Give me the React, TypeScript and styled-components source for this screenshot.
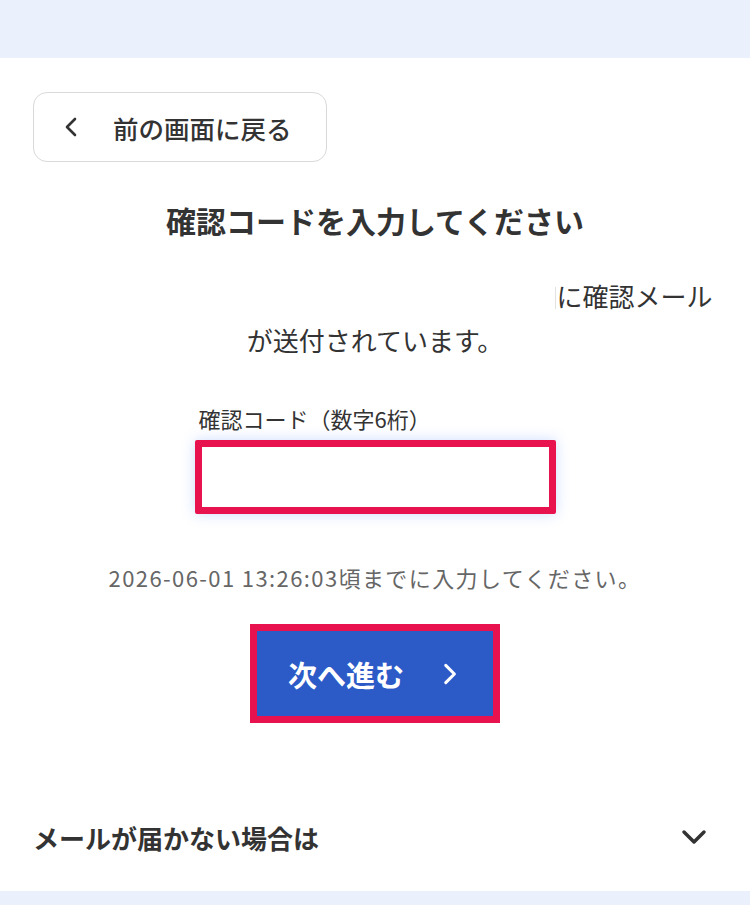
import React, { useState } from 'react';
import styled, { createGlobalStyle } from 'styled-components';

const GlobalStyle = createGlobalStyle`
    body {
        margin: 0;
        background: #ffffff;
        font-family: 'Noto Sans CJK JP', 'Noto Sans', sans-serif;
        color: #333333;
    }
`;

const Band = styled.div<{ height: number }>`
    height: ${({ height }) => height}px;
    background-color: #eaf1fd;
`;

const Card = styled.main`
    display: flex;
    flex-direction: column;
    padding: 34px 33px 36px;
    background-color: #ffffff;
`;

const BackButton = styled.button`
    display: flex;
    align-items: center;
    gap: 29px;
    width: 294px;
    height: 70px;
    padding: 0 0 0 26px;
    box-sizing: border-box;
    background: #ffffff;
    border: 1.5px solid #d9d9d9;
    border-radius: 14px;
    font-family: inherit;
    font-size: 25.5px;
    font-weight: 500;
    color: #333333;
    cursor: pointer;
`;

const Title = styled.h1`
    margin: 38px 0 0;
    font-size: 30px;
    font-weight: 700;
    line-height: 40px;
    text-align: center;
    color: #333333;
`;

const Lead = styled.p`
    margin: 34px 0 0;
    font-size: 26px;
    line-height: 44px;
    text-align: center;
    color: #333333;
`;

const HiddenAddress = styled.span`
    display: inline-block;
    width: 518px;
    height: 22px;
    vertical-align: -2px;
    border-right: 1px solid #e2e2e2;
`;

const Field = styled.div`
    display: flex;
    flex-direction: column;
    align-self: center;
    gap: 7px;
    margin-top: 41px;
`;

const Label = styled.label`
    padding-left: 4px;
    font-size: 22px;
    line-height: 30px;
    color: #333333;
`;

const CodeInput = styled.input`
    width: 361px;
    height: 74px;
    box-sizing: border-box;
    border: 7px solid #e8124f;
    border-radius: 2px;
    outline: none;
    padding: 0 14px;
    font-family: inherit;
    font-size: 26px;
    letter-spacing: 6px;
    color: #333333;
    box-shadow: 0 0 14px rgba(90, 140, 255, 0.3);
`;

const Deadline = styled.p`
    margin: 48px 0 0;
    font-size: 22px;
    line-height: 30px;
    letter-spacing: 1.4px;
    text-align: center;
    color: #666666;
`;

const NextButton = styled.button`
    display: flex;
    align-items: center;
    justify-content: center;
    gap: 32px;
    align-self: center;
    width: 250px;
    height: 99px;
    margin-top: 32px;
    box-sizing: border-box;
    padding: 0;
    background-color: #2c5bc8;
    border: 7px solid #e8124f;
    font-family: inherit;
    font-size: 29px;
    font-weight: 700;
    color: #ffffff;
    cursor: pointer;
`;

const Accordion = styled.button`
    display: flex;
    align-items: center;
    justify-content: space-between;
    margin-top: 96px;
    padding: 0 8px 0 0;
    height: 36px;
    background: transparent;
    border: none;
    font-family: inherit;
    font-size: 26px;
    font-weight: 700;
    color: #333333;
    cursor: pointer;
`;

const Chevron = ({ dir, size, color, width }: { dir: 'left' | 'right' | 'down'; size: number; color: string; width: number }) => {
    const d = dir === 'left' ? 'M15 4 L7 12 L15 20' : dir === 'right' ? 'M9 4 L17 12 L9 20' : 'M4 8 L12 16 L20 8';
    return (
        <svg width={size} height={size} viewBox="0 0 24 24" fill="none">
            <path d={d} stroke={color} strokeWidth={width} strokeLinecap="round" strokeLinejoin="round" />
        </svg>
    );
};

export default function App() {
    const [code, setCode] = useState('');
    const [open, setOpen] = useState(false);

    return (
        <>
            <GlobalStyle />
            <Band height={58} />
            <Card>
                <BackButton>
                    <Chevron dir="left" size={24} color="#333" width={2.6} />
                    前の画面に戻る
                </BackButton>

                <Title>確認コードを入力してください</Title>

                <Lead>
                    <HiddenAddress />
                    に確認メール
                    <br />
                    が送付されています。
                </Lead>

                <Field>
                    <Label htmlFor="code">確認コード（数字6桁）</Label>
                    <CodeInput
                        id="code"
                        inputMode="numeric"
                        maxLength={6}
                        value={code}
                        onChange={(e) => setCode(e.target.value)}
                    />
                </Field>

                <Deadline>2026-06-01 13:26:03頃までに入力してください。</Deadline>

                <NextButton>
                    次へ進む
                    <Chevron dir="right" size={26} color="#fff" width={2.8} />
                </NextButton>

                <Accordion onClick={() => setOpen(!open)}>
                    メールが届かない場合は
                    <Chevron dir="down" size={30} color="#333" width={2.8} />
                </Accordion>
            </Card>
            <Band height={14} />
        </>
    );
}
